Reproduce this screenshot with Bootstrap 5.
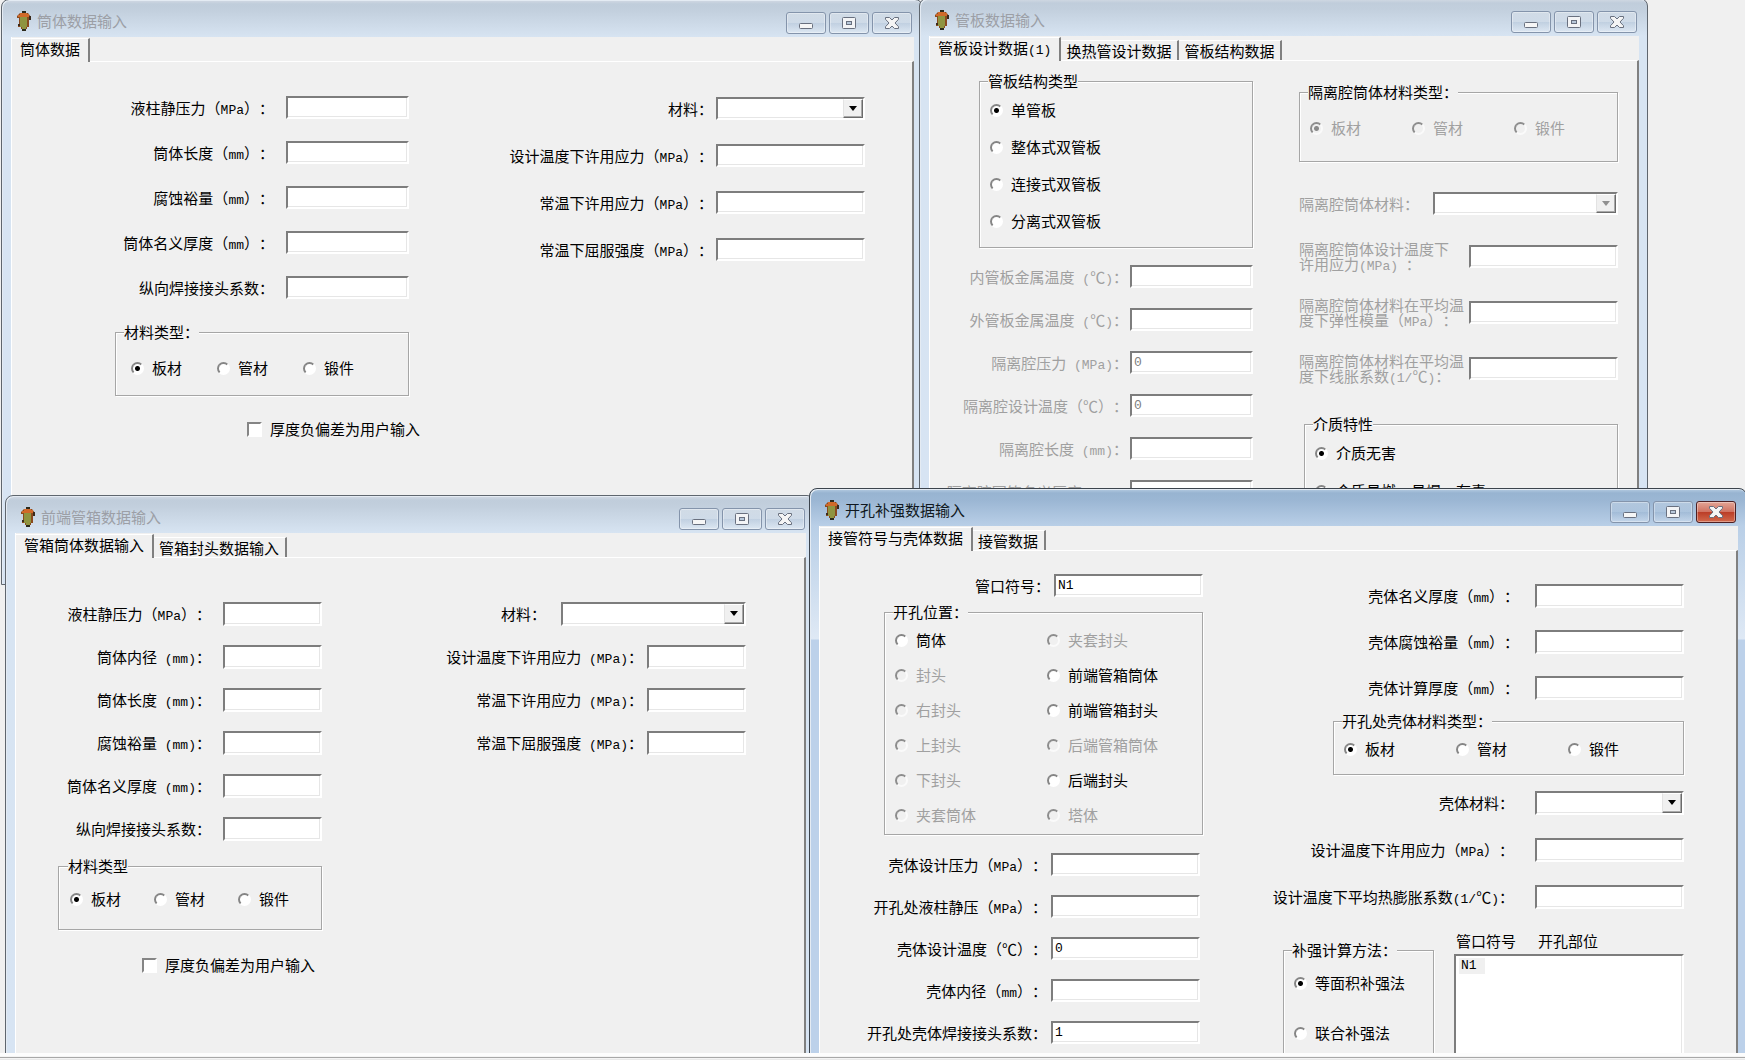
<!DOCTYPE html>
<html lang="zh-CN">
<head>
<meta charset="utf-8">
<meta name="viewport" content="width=device-width, initial-scale=1">
<title>数据输入</title>
<link href="https://cdn.jsdelivr.net/npm/bootstrap@5.3.0/dist/css/bootstrap.min.css" rel="stylesheet">
<style>
:root{--face:#f0f0f0;--dark:#808080;--off:#a0a0a0}
body{background:var(--face);color:#000;font:15px/18px "Noto Sans CJK SC",sans-serif;text-spacing-trim:space-all;font-feature-settings:"chws" 0,"halt" 0,"palt" 0}
.lat{font:13px/0 "Liberation Mono",monospace;white-space:pre}
.desk{overflow:hidden}
.strip{height:7px;background:#f4f4f4;border-top:3px solid #fdfdfd;border-bottom:1px solid #e9e9e9}
.strip::after{content:"";display:block;height:1px;margin-top:1px;background:#a8a8a8}

/* window frames */
.win{position:absolute;padding:0 8px 0 9px;border:1px solid #5f666e;border-radius:8px 8px 0 0;
  background:linear-gradient(#d3dae4 0,#c0cddb 4px,#c2cfdd 10px,#d7e4f2 37px,#d7e4f3 100%);box-shadow:inset 1px 1px 0 #e4ebf3}
.win-shell{left:1px;top:-1px;width:922px;height:586px}
.win-sheet{left:919px;top:-2px;width:729px;height:560px}
.win-box{left:5px;top:495px;width:810px;height:640px}
.win-hole{left:809px;top:488px;width:938px;height:640px;border-color:#3c444d;
  background:linear-gradient(#b6cce2 0,#98b4d1 4px,#9cb7d4 12px,#b9cfe7 37px,#dfe9f5 150px,#bcd1ea 151px)}
.bar{height:37px;color:#9c9fa6}
.win-hole .bar{color:#101820}
.bar .ico{width:14px;height:20px;margin:4px 6px 0 6px}
.bar-name{margin-top:5px}
.wbtn{width:40px;height:22px;padding:0;border:1px solid #8494ab;border-radius:3px;
  background:linear-gradient(rgba(255,255,255,.22),rgba(255,255,255,.05) 50%,rgba(120,150,185,.14) 51%,rgba(255,255,255,.2));
  box-shadow:inset 0 0 0 1px rgba(255,255,255,.35)}
.wbtn svg{display:block;margin:auto}
.bar-btns{gap:3px;margin-right:2px}
.win-box .bar-btns{margin-right:1px}
.wbtn-red{border-color:#4d1f22;background:linear-gradient(#e3a596,#d07463 48%,#bb3e28 52%,#d2694c)}
.sheet{background:var(--face)}
.tabrow{height:24px;padding-top:1px;border-left:1px solid #fff}
.tab-b{border:0;border-right:2px solid var(--dark);background:var(--face);height:20px;margin-top:3px;padding:0 6px 0 5px;line-height:20px;border-top:1px solid #fff;color:#000}
.tab-b.on{height:24px;margin-top:0;padding:0 8px 5px}
.pane{border-top:1px solid #fff;border-left:1px solid #fff;border-right:2px solid var(--dark)}
.win-shell .pane{height:523px}.win-sheet .pane{height:497px}.win-box .pane,.win-hole .pane{height:600px}

/* fields */
.fld{display:flex;align-items:center;justify-content:flex-end;white-space:nowrap}
.stack{display:flex;flex-direction:column}
.inp,.drop select,.listbox{appearance:none;height:23px;padding:0 2px;background:#fff;border:2px solid;border-color:#7d7d7d #fff #fff #7d7d7d;border-radius:0;
  font:13px/15px "Liberation Mono",monospace;color:#000;box-shadow:inset -1px -1px 0 #e6e6e6;outline:0}
.inp:disabled{color:#808080}
.tall .inp,.tall select{height:24px}
.drop{position:relative;display:flex}
.drop select{width:100%}
.drop::before{content:"";position:absolute;right:2px;top:2px;bottom:2px;width:20px;background:var(--face);border:1px solid;border-color:#fff #6b6b6b #6b6b6b #e3e3e3;box-shadow:inset -1px -1px 0 #a8a8a8;pointer-events:none}
.drop::after{content:"";position:absolute;right:8px;top:9px;border:4px solid transparent;border-top:5px solid #000;border-bottom:0;pointer-events:none}
.drop.off::after{border-top-color:#909090}
.off{color:var(--off)}
.w99{width:99px}.w123{width:123px}.w149{width:149px}.w185{width:185px}

.grp{margin:0;padding:0 8px;border:1px solid #a6a6a6;box-shadow:1px 1px 0 #fff,inset 1px 1px 0 #fff}
.grp>legend{float:none;width:auto;margin:0;padding:0;font-size:15px;line-height:18px;background:var(--face)}
.opts{padding-left:2px}
.opt{display:flex;flex:none;align-items:center;gap:8px;height:18px;white-space:nowrap}
.opt input{appearance:none;flex:none;width:13px;height:13px;margin:0;border:2px solid;border-color:#858585 #fff #fff #858585;border-radius:50%;background:#fff}
.opt input:checked{background:radial-gradient(circle,#000 2px,#fff 3px)}
.opt.off input{background:var(--face);border-color:#8d8d8d #fafafa #fafafa #8d8d8d}
.opt.off input:checked{background:radial-gradient(circle,#8a8a8a 2px,var(--face) 3px)}
.opt input[type=checkbox]{width:15px;height:15px;border-radius:0}

/* shell window */
.sh-a{width:397px;padding-top:34px}
.sh-b{width:456px;padding-top:35px}
.sh-a .fld{gap:12px}.sh-b .fld{gap:3px}
.gap22{gap:22px}.gap24{gap:24px}.gap26{gap:26px}.gap20{gap:20px}.gap19{gap:19px}.gap23{gap:23px}
.sh-grp{margin:24px 0 0 103px;height:73px}
.sh-grp .opts{padding:18px 0 0 7px}
.sh-grp .opt{width:86px}
.sh-chk{margin:24px 0 0 235px}

/* tube-sheet window */
.ts-a{width:323px;padding-top:11px}
.ts-a .fld{gap:2px}
.ts-kind{margin-left:49px;padding-bottom:17px}
.ts-kind .opts{padding-top:11px}
.ts-fields{margin-top:17px}
.ts-b{width:365px;padding:22px 0 0 46px}
.ts-mat{height:79px}
.ts-mat .opts{padding-top:18px}
.ts-mat .opt{width:102px}
.ts-b .fld{justify-content:space-between}
.ts-props{margin-top:30px}
.ts-two{line-height:15px;height:30px}
.ts-fluid{margin:32px 0 0 5px;height:120px}
.ts-fluid .opts{padding-top:11px}

/* channel-box window */
.cb-a{width:306px;padding-top:44px}
.cb-b{width:424px;padding-top:44px}
.cb-a .fld{gap:12px}.cb-b .fld{gap:4px}.cb-b .fld.wide{gap:15px}
.cb-grp{margin:16px 0 0 42px;height:73px;padding-left:9px}
.cb-grp .opts{padding-top:15px}
.cb-grp .opt{width:84px}
.cb-chk{margin:26px 0 0 126px}

/* opening window */
.op-a{width:383px;padding-top:23px}
.op-a .fld{gap:4px}
.op-place{margin:6px 0 0 64px;padding-bottom:10px}
.op-place .opts{padding-top:10px}
.op-place .stack{flex:none;gap:17px;width:152px}
.op-fields{margin:18px 3px 0 0}
.op-b{width:481px;padding-top:33px}
.op-b .fld{gap:16px}.op-b .op-low .fld{gap:21px}
.op-mat{margin:12px 0 0 130px;height:63px}
.op-mat .opts{padding-top:10px}
.op-mat .opt{width:112px}
.op-low{margin-top:16px}
.op-foot{margin-top:23px;gap:20px}
.op-calc{width:151px;margin-top:9px;height:140px}
.op-calc .opts{padding-top:15px;gap:32px}
.op-list{width:230px}
.op-heads{gap:22px;padding-left:2px}
.listbox{display:block;width:100%;height:120px;margin-top:4px;padding:2px 3px;overflow:hidden}
.listbox option{width:26px;height:16px;min-height:16px;padding:0 2px;background:var(--face)}
</style>
<script src="https://cdn.jsdelivr.net/npm/bootstrap@5.3.0/dist/js/bootstrap.bundle.min.js"></script>
</head>
<body>
<svg class="d-none" xmlns="http://www.w3.org/2000/svg">
  <symbol id="vessel" viewBox="0 0 14 20">
    <path d="M5 0h4v2h2l3 4v3h-2v7h-2v2H9v2H5v-2H4v-2H1v-3h1V7H0V5l3-3h2z" fill="#8a4a1e"/>
    <path d="M5 0h4v2H5zM5 18h4v2H5z" fill="#2c2a1c"/>
    <path d="M3 6h7v10H9v2H5v-2H3z" fill="#8f9440"/>
    <path d="M3 2h7v1h2v3H1V4h2z" fill="#d06a2a"/>
    <path d="M12 5h2v4h-2zM1 13h2v2H1z" fill="#3a2a1c"/>
  </symbol>
  <symbol id="g-min" viewBox="0 0 16 14"><rect x="1.5" y="7.5" width="13" height="5" rx="1" fill="#f6f6f6" stroke="#69707f"/></symbol>
  <symbol id="g-max" viewBox="0 0 16 14"><rect x="1.5" y="1.5" width="13" height="11" rx="1" fill="#f3f4f6" stroke="#69707f"/><rect x="5.5" y="5.5" width="5" height="3" fill="#b8c8da" stroke="#69707f"/></symbol>
  <symbol id="g-x" viewBox="0 0 16 14"><path d="M1.5 1.5h4L8 4l2.500-2.500h4v1.800L11 7l3.500 3.700v1.800h-4L8 10l-2.500 2.500h-4v-1.800L5 7 1.500 3.300z" fill="#f5f5f5" stroke="#69707f"/></symbol>
</svg>

<div class="vh-100 d-flex flex-column">
<main class="desk position-relative flex-grow-1">

<section class="win win-shell">
  <header class="bar d-flex align-items-center">
    <svg class="ico"><use href="#vessel"/></svg><span class="bar-name">筒体数据输入</span>
    <div class="bar-btns d-flex ms-auto mt-2">
      <button class="wbtn" aria-label="最小化"><svg width="16" height="14"><use href="#g-min"/></svg></button>
      <button class="wbtn" aria-label="最大化"><svg width="16" height="14"><use href="#g-max"/></svg></button>
      <button class="wbtn" aria-label="关闭"><svg width="16" height="14"><use href="#g-x"/></svg></button>
    </div>
  </header>
  <div class="sheet">
    <nav class="tabrow d-flex"><button class="tab-b on">筒体数据</button></nav>
    <div class="pane d-flex align-items-start">
      <div class="sh-a">
        <div class="stack gap22">
          <label class="fld"><span>液柱静压力（<span class="lat">MPa</span>）：</span><input class="inp w123"></label>
          <label class="fld"><span>筒体长度（<span class="lat">mm</span>）：</span><input class="inp w123"></label>
          <label class="fld"><span>腐蚀裕量（<span class="lat">mm</span>）：</span><input class="inp w123"></label>
          <label class="fld"><span>筒体名义厚度（<span class="lat">mm</span>）：</span><input class="inp w123"></label>
          <label class="fld"><span>纵向焊接接头系数：</span><input class="inp w123"></label>
        </div>
        <fieldset class="grp sh-grp"><legend>材料类型：</legend>
          <div class="opts d-flex">
            <label class="opt"><input type="radio" name="m1" checked>板材</label>
            <label class="opt"><input type="radio" name="m1">管材</label>
            <label class="opt"><input type="radio" name="m1">锻件</label>
          </div>
        </fieldset>
        <label class="opt sh-chk"><input type="checkbox">厚度负偏差为用户输入</label>
      </div>
      <div class="sh-b stack gap24">
        <label class="fld"><span>材料：</span><span class="drop w149"><select><option></option></select></span></label>
        <label class="fld"><span>设计温度下许用应力（<span class="lat">MPa</span>）：</span><input class="inp w149"></label>
        <label class="fld"><span>常温下许用应力（<span class="lat">MPa</span>）：</span><input class="inp w149"></label>
        <label class="fld"><span>常温下屈服强度（<span class="lat">MPa</span>）：</span><input class="inp w149"></label>
      </div>
    </div>
  </div>
</section>

<section class="win win-sheet">
  <header class="bar d-flex align-items-center">
    <svg class="ico"><use href="#vessel"/></svg><span class="bar-name">管板数据输入</span>
    <div class="bar-btns d-flex ms-auto mt-2">
      <button class="wbtn" aria-label="最小化"><svg width="16" height="14"><use href="#g-min"/></svg></button>
      <button class="wbtn" aria-label="最大化"><svg width="16" height="14"><use href="#g-max"/></svg></button>
      <button class="wbtn" aria-label="关闭"><svg width="16" height="14"><use href="#g-x"/></svg></button>
    </div>
  </header>
  <div class="sheet">
    <nav class="tabrow d-flex"><button class="tab-b on">管板设计数据<span class="lat">(1)</span></button><button class="tab-b">换热管设计数据</button><button class="tab-b">管板结构数据</button></nav>
    <div class="pane d-flex align-items-start">
      <div class="ts-a">
        <fieldset class="grp ts-kind"><legend>管板结构类型</legend>
          <div class="opts stack gap19">
            <label class="opt"><input type="radio" name="kind" checked>单管板</label>
            <label class="opt"><input type="radio" name="kind">整体式双管板</label>
            <label class="opt"><input type="radio" name="kind">连接式双管板</label>
            <label class="opt"><input type="radio" name="kind">分离式双管板</label>
          </div>
        </fieldset>
        <div class="ts-fields stack gap20 off">
          <label class="fld"><span>内管板金属温度<span class="lat"> (</span>℃<span class="lat">)</span>：</span><input class="inp w123" disabled></label>
          <label class="fld"><span>外管板金属温度<span class="lat"> (</span>℃<span class="lat">)</span>：</span><input class="inp w123" disabled></label>
          <label class="fld"><span>隔离腔压力<span class="lat"> (MPa)</span>：</span><input class="inp w123" value="0" disabled></label>
          <label class="fld"><span>隔离腔设计温度（℃）：</span><input class="inp w123" value="0" disabled></label>
          <label class="fld"><span>隔离腔长度<span class="lat"> (mm)</span>：</span><input class="inp w123" disabled></label>
          <label class="fld"><span>隔离腔圆筒名义厚度<span class="lat">(mm)</span>：</span><input class="inp w123" disabled></label>
        </div>
      </div>
      <div class="ts-b">
        <fieldset class="grp ts-mat"><legend>隔离腔筒体材料类型：</legend>
          <div class="opts d-flex">
            <label class="opt off"><input type="radio" name="m2" checked disabled>板材</label>
            <label class="opt off"><input type="radio" name="m2" disabled>管材</label>
            <label class="opt off"><input type="radio" name="m2" disabled>锻件</label>
          </div>
        </fieldset>
        <div class="ts-props stack off gap26">
          <label class="fld"><span>隔离腔筒体材料：</span><span class="drop off w185"><select disabled><option></option></select></span></label>
          <label class="fld ts-two"><span>隔离腔筒体设计温度下<br>许用应力<span class="lat">(MPa) </span>：</span><input class="inp w149" disabled></label>
          <label class="fld ts-two"><span>隔离腔筒体材料在平均温<br>度下弹性模量（<span class="lat">MPa</span>）：</span><input class="inp w149" disabled></label>
          <label class="fld ts-two"><span>隔离腔筒体材料在平均温<br>度下线胀系数<span class="lat">(1/</span>℃<span class="lat">)</span>：</span><input class="inp w149" disabled></label>
        </div>
        <fieldset class="grp ts-fluid"><legend>介质特性</legend>
          <div class="opts stack gap20">
            <label class="opt"><input type="radio" name="fluid" checked>介质无害</label>
            <label class="opt"><input type="radio" name="fluid">介质易燃、易爆、有毒</label>
          </div>
        </fieldset>
      </div>
    </div>
  </div>
</section>

<section class="win win-box">
  <header class="bar d-flex align-items-center">
    <svg class="ico"><use href="#vessel"/></svg><span class="bar-name">前端管箱数据输入</span>
    <div class="bar-btns d-flex ms-auto mt-2">
      <button class="wbtn" aria-label="最小化"><svg width="16" height="14"><use href="#g-min"/></svg></button>
      <button class="wbtn" aria-label="最大化"><svg width="16" height="14"><use href="#g-max"/></svg></button>
      <button class="wbtn" aria-label="关闭"><svg width="16" height="14"><use href="#g-x"/></svg></button>
    </div>
  </header>
  <div class="sheet">
    <nav class="tabrow d-flex"><button class="tab-b on">管箱筒体数据输入</button><button class="tab-b">管箱封头数据输入</button></nav>
    <div class="pane d-flex align-items-start">
      <div class="cb-a">
        <div class="stack gap19 tall">
          <label class="fld"><span>液柱静压力（<span class="lat">MPa</span>）：</span><input class="inp w99"></label>
          <label class="fld"><span>筒体内径<span class="lat"> (mm)</span>：</span><input class="inp w99"></label>
          <label class="fld"><span>筒体长度<span class="lat"> (mm)</span>：</span><input class="inp w99"></label>
          <label class="fld"><span>腐蚀裕量<span class="lat"> (mm)</span>：</span><input class="inp w99"></label>
          <label class="fld"><span>筒体名义厚度<span class="lat"> (mm)</span>：</span><input class="inp w99"></label>
          <label class="fld"><span>纵向焊接接头系数：</span><input class="inp w99"></label>
        </div>
        <fieldset class="grp cb-grp"><legend>材料类型</legend>
          <div class="opts d-flex">
            <label class="opt"><input type="radio" name="m3" checked>板材</label>
            <label class="opt"><input type="radio" name="m3">管材</label>
            <label class="opt"><input type="radio" name="m3">锻件</label>
          </div>
        </fieldset>
        <label class="opt cb-chk"><input type="checkbox">厚度负偏差为用户输入</label>
      </div>
      <div class="cb-b stack gap19 tall">
        <label class="fld wide"><span>材料：</span><span class="drop w185"><select><option></option></select></span></label>
        <label class="fld"><span>设计温度下许用应力<span class="lat"> (MPa)</span>：</span><input class="inp w99"></label>
        <label class="fld"><span>常温下许用应力<span class="lat"> (MPa)</span>：</span><input class="inp w99"></label>
        <label class="fld"><span>常温下屈服强度<span class="lat"> (MPa)</span>：</span><input class="inp w99"></label>
      </div>
    </div>
  </div>
</section>

<section class="win win-hole">
  <header class="bar d-flex align-items-center">
    <svg class="ico"><use href="#vessel"/></svg><span class="bar-name">开孔补强数据输入</span>
    <div class="bar-btns d-flex ms-auto mt-2">
      <button class="wbtn" aria-label="最小化"><svg width="16" height="14"><use href="#g-min"/></svg></button>
      <button class="wbtn" aria-label="最大化"><svg width="16" height="14"><use href="#g-max"/></svg></button>
      <button class="wbtn wbtn-red" aria-label="关闭"><svg width="16" height="14"><use href="#g-x"/></svg></button>
    </div>
  </header>
  <div class="sheet">
    <nav class="tabrow d-flex"><button class="tab-b on">接管符号与壳体数据</button><button class="tab-b">接管数据</button></nav>
    <div class="pane d-flex align-items-start">
      <div class="op-a">
        <label class="fld"><span>管口符号：</span><input class="inp w149" value="N1"></label>
        <fieldset class="grp op-place"><legend>开孔位置：</legend>
          <div class="opts d-flex">
            <div class="stack">
              <label class="opt"><input type="radio" name="place">筒体</label>
              <label class="opt off"><input type="radio" name="place" disabled>封头</label>
              <label class="opt off"><input type="radio" name="place" disabled>右封头</label>
              <label class="opt off"><input type="radio" name="place" disabled>上封头</label>
              <label class="opt off"><input type="radio" name="place" disabled>下封头</label>
              <label class="opt off"><input type="radio" name="place" disabled>夹套筒体</label>
            </div>
            <div class="stack">
              <label class="opt off"><input type="radio" name="place" disabled>夹套封头</label>
              <label class="opt"><input type="radio" name="place">前端管箱筒体</label>
              <label class="opt"><input type="radio" name="place">前端管箱封头</label>
              <label class="opt off"><input type="radio" name="place" disabled>后端管箱筒体</label>
              <label class="opt"><input type="radio" name="place">后端封头</label>
              <label class="opt off"><input type="radio" name="place" disabled>塔体</label>
            </div>
          </div>
        </fieldset>
        <div class="op-fields stack gap19">
          <label class="fld"><span>壳体设计压力（<span class="lat">MPa</span>）：</span><input class="inp w149"></label>
          <label class="fld"><span>开孔处液柱静压（<span class="lat">MPa</span>）：</span><input class="inp w149"></label>
          <label class="fld"><span>壳体设计温度（℃）：</span><input class="inp w149" value="0"></label>
          <label class="fld"><span>壳体内径（<span class="lat">mm</span>）：</span><input class="inp w149"></label>
          <label class="fld"><span>开孔处壳体焊接接头系数：</span><input class="inp w149" value="1"></label>
        </div>
      </div>
      <div class="op-b">
        <div class="stack gap22 tall">
          <label class="fld"><span>壳体名义厚度（<span class="lat">mm</span>）：</span><input class="inp w149"></label>
          <label class="fld"><span>壳体腐蚀裕量（<span class="lat">mm</span>）：</span><input class="inp w149"></label>
          <label class="fld"><span>壳体计算厚度（<span class="lat">mm</span>）：</span><input class="inp w149"></label>
        </div>
        <fieldset class="grp op-mat"><legend>开孔处壳体材料类型：</legend>
          <div class="opts d-flex">
            <label class="opt"><input type="radio" name="m4" checked>板材</label>
            <label class="opt"><input type="radio" name="m4">管材</label>
            <label class="opt"><input type="radio" name="m4">锻件</label>
          </div>
        </fieldset>
        <div class="op-low stack gap23 tall">
          <label class="fld"><span>壳体材料：</span><span class="drop w149"><select><option></option></select></span></label>
          <label class="fld"><span>设计温度下许用应力（<span class="lat">MPa</span>）：</span><input class="inp w149"></label>
          <label class="fld"><span>设计温度下平均热膨胀系数<span class="lat">(1/</span>℃<span class="lat">)</span>：</span><input class="inp w149"></label>
        </div>
        <div class="op-foot d-flex justify-content-end align-items-start">
          <fieldset class="grp op-calc"><legend>补强计算方法：</legend>
            <div class="opts stack">
              <label class="opt"><input type="radio" name="calc" checked>等面积补强法</label>
              <label class="opt"><input type="radio" name="calc">联合补强法</label>
            </div>
          </fieldset>
          <div class="op-list">
            <div class="op-heads d-flex"><label for="holes">管口符号</label><span>开孔部位</span></div>
            <select id="holes" class="listbox" size="6"><option>N1</option></select>
          </div>
        </div>
      </div>
    </div>
  </div>
</section>

</main>
<footer class="strip"></footer>
</div>
</body>
</html>
